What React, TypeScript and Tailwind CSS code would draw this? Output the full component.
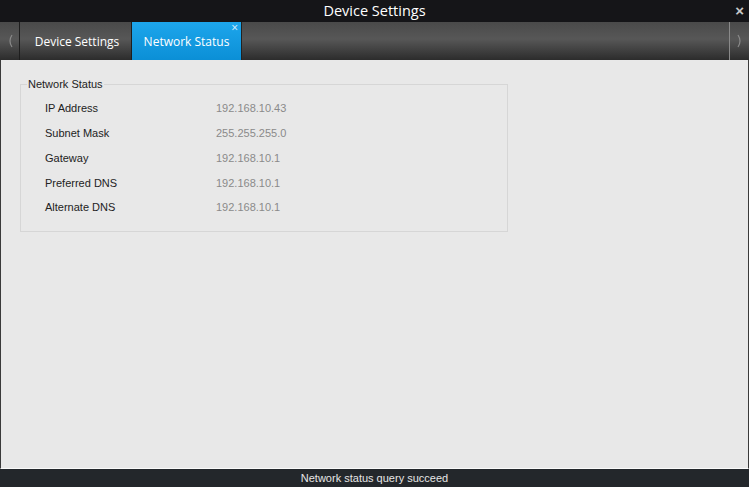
const ROWS = [
  ['IP Address', '192.168.10.43'],
  ['Subnet Mask', '255.255.255.0'],
  ['Gateway', '192.168.10.1'],
  ['Preferred DNS', '192.168.10.1'],
  ['Alternate DNS', '192.168.10.1'],
]

function Chevron({ dir }: { dir: 'left' | 'right' }) {
  return (
    <svg width="6" height="14" viewBox="0 0 6 14" className="text-[#8a8a8a]">
      <path
        d={dir === 'left' ? 'M5 1 Q1 7 5 13' : 'M1 1 Q5 7 1 13'}
        fill="none"
        stroke="currentColor"
        strokeWidth="1.2"
      />
    </svg>
  )
}

export default function App() {
  return (
    <div className="flex h-[487px] w-[749px] flex-col overflow-hidden bg-[#e8e8e8] font-['Liberation_Sans',Arial,sans-serif]">
      {/* title bar */}
      <div className="relative flex h-[22px] shrink-0 items-center justify-center bg-[#151518]">
        <span className="font-['Open_Sans','Noto_Sans',sans-serif] text-[14.5px] leading-none text-white">
          Device Settings
        </span>
        <span className="absolute right-[5px] top-[3px] text-[15px] leading-none font-bold text-[#c8c8c8]">
          ×
        </span>
      </div>

      {/* tab bar */}
      <div className="flex h-[38px] shrink-0 bg-[linear-gradient(#4a4a4a,#575757_45%,#2c2c2c)] font-['Open_Sans','Noto_Sans',sans-serif] text-[12px] text-white">
        <div className="flex w-[20px] items-center justify-center border-r border-[#1e1e1e]">
          <Chevron dir="left" />
        </div>
        <div className="flex w-[112px] items-center justify-center border-r border-[#1e1e1e] pl-[3px] pt-[2px]">
          Device Settings
        </div>
        <div className="relative flex w-[110px] items-center justify-center border-r border-[#222] bg-[linear-gradient(#1da6ec,#0b8fd6)] pt-[2px]">
          Network Status
          <span className="absolute right-[3px] top-0 text-[12px] leading-none text-[#dff2ff]">×</span>
        </div>
        <div className="flex-1" />
        <div className="flex w-[20px] items-center justify-center border-l border-[#8a8a8a]">
          <Chevron dir="right" />
        </div>
      </div>

      {/* content */}
      <div className="flex-1 border-x border-b border-x-[#3a3a3a] border-b-[#fafafa] px-[19px] pt-[18px]">
        <fieldset className="w-[488px] border border-[#d6d6d6] pb-[11px] pt-[5px]">
          <legend className="ml-[6px] px-[1px] text-[11px] leading-[13px] text-[#222]">Network Status</legend>
          {ROWS.map(([label, value]) => (
            <div key={label} className="flex h-[24.8px] items-center text-[11px]">
              <span className="w-[195px] pl-[24px] text-[#222]">{label}</span>
              <span className="text-[#8a8a8a]">{value}</span>
            </div>
          ))}
        </fieldset>
      </div>

      {/* status bar */}
      <div className="flex h-[18px] shrink-0 items-center justify-center bg-[#23272b] text-[11px] text-[#e6e6e6]">
        Network status query succeed
      </div>
    </div>
  )
}
